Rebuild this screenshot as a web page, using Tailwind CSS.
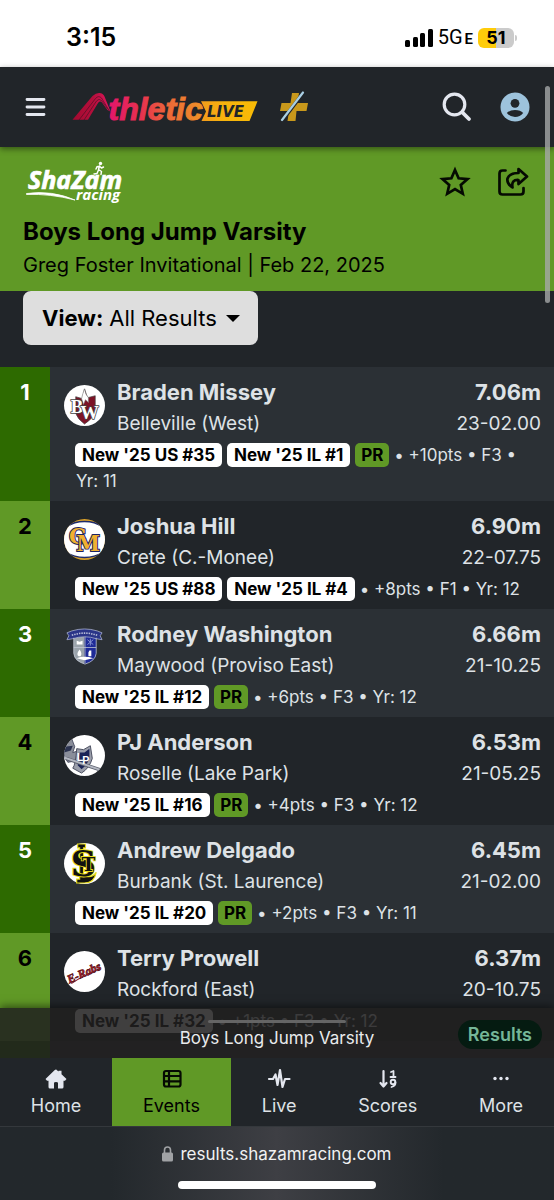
<!DOCTYPE html>
<html lang="en">
<head>
<meta charset="utf-8">
<meta name="viewport" content="width=device-width, initial-scale=1">
<title>Boys Long Jump Varsity</title>
<script src="https://cdn.jsdelivr.net/npm/@tailwindcss/browser@4"></script>
</head>
<body class="relative flex h-screen flex-col overflow-hidden bg-[#212529] font-['Inter','Liberation_Sans',sans-serif] text-[#dee2e6]">

<!-- Phone status bar -->
<div class="flex h-[67px] shrink-0 items-center justify-between bg-white pt-2 pr-10 pl-[66px] text-black">
  <time class="text-[25px] font-semibold">3:15</time>
  <div class="flex items-center gap-[5px]">
    <svg class="h-[18px] w-7" viewBox="0 0 28 18" aria-hidden="true">
      <rect x="0" y="11" width="5" height="7" rx="1.5"/><rect x="8" y="8" width="5" height="10" rx="1.5"/><rect x="15" y="4" width="5" height="14" rx="1.5"/><rect x="23" y="0" width="5" height="18" rx="1.5"/>
    </svg>
    <span class="font-['Roboto','Inter',sans-serif] text-xl leading-6">5G<span class="ml-[2px] text-[15px] font-semibold">E</span></span>
    <span class="relative flex h-5 w-9 items-center justify-center rounded-md bg-linear-to-r from-[#ffcc0a] from-51% to-[#cbcbcb] to-51% text-lg font-bold">51
      <span class="absolute top-[7px] -right-[3px] h-[6px] w-[2px] rounded-r bg-[#cbcbcb]"></span>
    </span>
  </div>
</div>

<!-- Site bar -->
<header class="relative z-10 flex h-20 shrink-0 items-center bg-[#212529] pr-6 pl-6 shadow-[0_2px_6px_rgba(0,0,0,0.45)]">
  <button type="button" aria-label="Menu" class="flex h-8 w-6 items-center">
    <svg class="h-5 w-6" viewBox="0 0 24 20" fill="none" stroke="#e4e7ef" stroke-width="2.8" stroke-linecap="round" aria-hidden="true"><path d="M3 2.5h17M3 10h17M3 17.5h17"/></svg>
  </button>
  <a href="#" aria-label="AthleticLIVE" class="ml-6">
    <svg class="h-10 w-[188px]" viewBox="72 87 188 40" aria-hidden="true">
      <defs>
        <linearGradient id="mark" x1="0" x2="1"><stop offset="0" stop-color="#a30a30"/><stop offset=".55" stop-color="#b50f3c"/><stop offset="1" stop-color="#e3155e"/></linearGradient>
        <linearGradient id="word" x1="0" x2="1"><stop offset="0" stop-color="#e3156b"/><stop offset=".35" stop-color="#e7324f"/><stop offset=".65" stop-color="#ec6a37"/><stop offset="1" stop-color="#ef9327"/></linearGradient>
        <linearGradient id="live" x1="0" x2="1"><stop offset="0" stop-color="#f39a1c"/><stop offset=".4" stop-color="#f6b30d"/><stop offset="1" stop-color="#f8bb05"/></linearGradient>
      </defs>
      <path fill="url(#mark)" d="M72.500 119.800L92.500 96Q96 92.800 99.500 93Q103 93.200 104.500 96.500L110.500 111.500L107.500 110L102 102.500Q100 100.500 98 103L88 119.800Z"/>
      <path fill="none" stroke="#3a1020" stroke-width=".6" d="M79 120L95.500 98.500Q98.500 95 101.500 98L109.500 111M84 120L96.500 101Q99 98 101.500 100.500L108 109.500"/>
      <text x="108.500" y="119.500" font-family="Liberation Sans, sans-serif" font-size="32" font-weight="700" font-style="italic" fill="url(#word)" stroke="url(#word)" stroke-width="1">thletic</text>
      <path fill="url(#live)" d="M201 101.300H257.500L249.500 121H201.500L206 111.500Z"/>
      <text x="207" y="117" font-family="DejaVu Sans, sans-serif" font-size="15" font-weight="700" font-style="oblique" fill="#212529">LIVE</text>
    </svg>
  </a>
  <a href="#" aria-label="AthleticLIVE Plus" class="ml-5">
    <svg class="h-8 w-7" viewBox="0 0 28 32" aria-hidden="true"><path fill="#c8981b" d="M12 2H19L17.500 12H28L26.500 20H16.500L15.500 30H7.500L9 20H0L1.500 12H10.500Z"/><path stroke="#212529" stroke-width="3.500" d="M2 30L24 1"/><path stroke="#a9cfe4" stroke-width="2.200" stroke-linecap="round" d="M2 29L23 1.500"/></svg>
  </a>
  <button type="button" aria-label="Search" class="ml-auto">
    <svg class="size-8" viewBox="0 0 32 32" fill="none" stroke="#e4e7ef" stroke-linecap="round" aria-hidden="true"><circle cx="13.500" cy="13.500" r="10.300" stroke-width="3.200"/><path stroke-width="3.800" d="M21.500 21.500L28 28"/></svg>
  </button>
  <button type="button" aria-label="Account" class="ml-[27px]">
    <svg class="size-[30px]" viewBox="0 0 30 30" aria-hidden="true"><circle cx="15" cy="15" r="14.500" fill="#9dc3dc"/><circle cx="15" cy="11.300" r="4.400" fill="#212529"/><path fill="#212529" d="M6.800 21Q9.500 18 15 18T23.200 21Q20 25 15 25T6.800 21Z"/></svg>
  </button>
</header>

<!-- Event header -->
<section class="h-36 shrink-0 bg-[#609926] px-[23px] pt-3 text-black">
  <div class="flex items-start justify-between">
    <svg class="h-12 w-[104px]" viewBox="23 159 104 48" fill="#fff" role="img" aria-label="ShaZam racing">
      <g font-family="Open Sans, sans-serif" font-weight="700" font-style="italic">
        <text x="28" y="189" font-size="25" stroke="#fff" stroke-width=".7">ShaZam</text>
        <text x="76" y="200" font-size="15">racing</text>
      </g>
      <path d="M26.500 193.500Q52 190 75 200Q50 193.500 26.500 194.500Z" stroke="#fff" stroke-width=".8"/>
      <circle cx="100.500" cy="163.500" r="1.700"/>
      <path fill="none" stroke="#fff" stroke-width="1.500" stroke-linecap="round" stroke-linejoin="round" d="M99.500 166L98.500 169.500L101.500 171.500L101 174.500M98.500 170L97 173.500L94 174M96 169L97 166.800L99.500 166.200L101.500 168L103.500 167"/>
    </svg>
    <div class="flex items-center gap-[26px] pt-[7px] pr-[2px]">
      <button type="button" aria-label="Favorite">
        <svg class="size-8" viewBox="0 0 32 32" fill="none" stroke="#050a02" stroke-width="2.700" aria-hidden="true"><path d="M16 4L19.600 12.300L28.500 13.100L21.800 19L23.800 27.800L16 23.100L8.200 27.800L10.200 19L3.500 13.100L12.400 12.300Z"/></svg>
      </button>
      <button type="button" aria-label="Share">
        <svg class="size-8" viewBox="0 0 32 32" fill="none" stroke="#050a02" stroke-width="2.700" stroke-linejoin="round" stroke-linecap="round" aria-hidden="true"><path d="M8.500 4.500H5.500Q2.500 4.500 2.500 7.500V25.500Q2.500 28.500 5.500 28.500H23.500Q26.500 28.500 26.500 25.500V22"/><path d="M21.500 3L30 10.500L21.500 18V14Q14 13.500 15.500 21.500Q9.500 17.500 10.500 12.500Q12.500 7 21.500 7Z"/></svg>
      </button>
    </div>
  </div>
  <h1 class="mt-3 text-2xl leading-[26px] font-bold">Boys Long Jump Varsity</h1>
  <p class="mt-[7px] text-xl leading-[26px]">Greg Foster Invitational | Feb 22, 2025</p>
</section>

<main class="relative min-h-0 flex-1 overflow-hidden">
  <div class="flex h-[76px] px-[23px]">
    <label class="relative flex h-[54px] items-center gap-[6px] rounded-lg bg-[#dedede] pl-[19px] text-[22px] text-black">
      <span class="font-bold">View:</span>
      <select class="appearance-none bg-transparent pr-[41px] outline-none"><option>All Results</option></select>
      <svg class="pointer-events-none absolute right-[18px] h-[7px] w-[14px]" viewBox="0 0 14 7" aria-hidden="true"><path d="M0 0H14L7 7Z"/></svg>
    </label>
  </div>

  <ol>
    <li class="flex bg-[#2b3035]">
      <div class="w-[50px] shrink-0 bg-[#2d6a00] pt-[10px] text-center text-[22px] leading-[31px] font-bold text-white">1</div>
      <div class="min-w-0 flex-1 pt-[10px] pr-[13px] pb-[7px] pl-[14px]">
        <div class="flex items-start gap-3">
          <svg class="mt-2 size-[41px] shrink-0" viewBox="0 0 42 42" aria-hidden="true"><circle cx="21" cy="21" r="21" fill="#fff"/><path fill="#7c1326" stroke="#444" stroke-width=".7" d="M12 12L19 14L21 4L24 13L32 11V28Q28 36 21 40Q14 35 12 29Z"/><path fill="#fff" stroke="#777" stroke-width=".6" d="M18 14Q19 9 21 4Q22 10 25 13L25 18L22 15L20 20Z"/><text x="7" y="29" font-family="Liberation Serif, serif" font-weight="700" font-size="19" fill="#fff" stroke="#444" stroke-width="1.600" paint-order="stroke">B<tspan dx="-3" dy="6">W</tspan></text></svg>
          <div class="min-w-0 flex-1">
            <div class="flex justify-between text-[22px] leading-[31px] font-bold"><a href="#">Braden Missey</a><span>7.06m</span></div>
            <div class="flex justify-between text-[19px] leading-[31px]"><span>Belleville (West)</span><span>23-02.00</span></div>
          </div>
        </div>
        <p class="mt-[3px] pl-3 text-[17px] leading-[26px]"><span class="-ml-px rounded-[5px] bg-white px-[7px] py-[2px] font-bold text-black">New '25 US #35</span> <span class="rounded-[5px] bg-white px-[7px] py-[2px] font-bold text-black">New '25 IL #1</span> <span class="rounded-[5px] bg-[#609926] px-[6px] py-[2px] font-bold text-black">PR</span> • +10pts • F3 • <span class="whitespace-nowrap">Yr: 11</span></p>
      </div>
    </li>
    <li class="flex bg-[#212529]">
      <div class="w-[50px] shrink-0 bg-[#609926] pt-[10px] text-center text-[22px] leading-[31px] font-bold text-black">2</div>
      <div class="min-w-0 flex-1 pt-[10px] pr-[13px] pb-[7px] pl-[14px]">
        <div class="flex items-start gap-3">
          <svg class="mt-2 size-[41px] shrink-0" viewBox="0 0 42 42" aria-hidden="true"><defs><clipPath id="c2"><circle cx="21" cy="21" r="21"/></clipPath></defs><g clip-path="url(#c2)"><rect width="42" height="42" fill="#d9a02a"/><ellipse cx="21" cy="21" rx="26" ry="18.500" fill="#fff" stroke="#1c2a6b" stroke-width="1.500"/></g><text x="5" y="26" font-family="DejaVu Serif, serif" font-weight="700" font-size="22" fill="#f0b030" stroke="#1c2364" stroke-width="2" paint-order="stroke">C<tspan dx="-10" dy="7">M</tspan></text></svg>
          <div class="min-w-0 flex-1">
            <div class="flex justify-between text-[22px] leading-[31px] font-bold"><a href="#">Joshua Hill</a><span>6.90m</span></div>
            <div class="flex justify-between text-[19px] leading-[31px]"><span>Crete (C.-Monee)</span><span>22-07.75</span></div>
          </div>
        </div>
        <p class="mt-[3px] pl-3 text-[17px] leading-[26px]"><span class="-ml-px rounded-[5px] bg-white px-[7px] py-[2px] font-bold text-black">New '25 US #88</span> <span class="rounded-[5px] bg-white px-[7px] py-[2px] font-bold text-black">New '25 IL #4</span> • +8pts • F1 • Yr: 12</p>
      </div>
    </li>
    <li class="flex bg-[#2b3035]">
      <div class="w-[50px] shrink-0 bg-[#2d6a00] pt-[10px] text-center text-[22px] leading-[31px] font-bold text-white">3</div>
      <div class="min-w-0 flex-1 pt-[10px] pr-[13px] pb-[7px] pl-[14px]">
        <div class="flex items-start gap-3">
          <svg class="mt-2 size-[41px] shrink-0" viewBox="0 0 42 42" aria-hidden="true"><path fill="#9aa3ab" d="M10 10H21V38Q10 35 10 27Z"/><path fill="#1f2b98" d="M21 10H33V27Q33 35 21 38Z"/><path fill="#2a3588" stroke="#aab2d0" stroke-width=".8" d="M3 6L8 4Q21 0 34 4L39 6L37 9L39 13L33 12Q21 8 9 12L3 13L5 9Z"/><path stroke="#c3c8d4" stroke-width=".8" fill="none" d="M10 21H33M21.500 10V37M10 11V27Q11 35 21.500 38Q32 35 33 27V11"/><path stroke="#b7bdd8" stroke-width="1.600" stroke-dasharray="1.500 1" fill="none" d="M8 8.500Q21 4 34 8.500"/><path fill="#fff" d="M13 14L16 15L19 14V18H13ZM16 23Q19 27 17 30H15Q12 28 16 23ZM26 24H28V30H25V26ZM13 32Q21 29 30 32L21 34Z"/><path stroke="#8a94d4" stroke-width="1" d="M24 13L30 18M30 13L24 18M27 12V19"/></svg>
          <div class="min-w-0 flex-1">
            <div class="flex justify-between text-[22px] leading-[31px] font-bold"><a href="#">Rodney Washington</a><span>6.66m</span></div>
            <div class="flex justify-between text-[19px] leading-[31px]"><span>Maywood (Proviso East)</span><span>21-10.25</span></div>
          </div>
        </div>
        <p class="mt-[3px] pl-3 text-[17px] leading-[26px]"><span class="-ml-px rounded-[5px] bg-white px-[7px] py-[2px] font-bold text-black">New '25 IL #12</span> <span class="rounded-[5px] bg-[#609926] px-[6px] py-[2px] font-bold text-black">PR</span> • +6pts • F3 • Yr: 12</p>
      </div>
    </li>
    <li class="flex bg-[#212529]">
      <div class="w-[50px] shrink-0 bg-[#609926] pt-[10px] text-center text-[22px] leading-[31px] font-bold text-black">4</div>
      <div class="min-w-0 flex-1 pt-[10px] pr-[13px] pb-[7px] pl-[14px]">
        <div class="flex items-start gap-3">
          <svg class="mt-2 size-[41px] shrink-0" viewBox="0 0 42 42" aria-hidden="true"><defs><clipPath id="c4"><circle cx="21" cy="21" r="21"/></clipPath></defs><g clip-path="url(#c4)"><rect width="42" height="42" fill="#fff"/><path fill="#8a8e9a" stroke="#33384f" stroke-width=".8" d="M0 6L8 4L11 12L9 18L15 16L14 26L4 28L0 22Z"/><path fill="#2b3350" d="M0 12L9 11L7 16L0 18Z"/><path fill="#9a9eaa" stroke="#4a4e60" stroke-width="1" d="M13 14L20 15L27 11L29 24Q26 34 18 39L9 34Q12 30 13 14Z"/><path fill="#1b2456" d="M16 18L21 18L26 14V24Q23 32 18 35L14 31Z"/><path stroke="#5a5e6c" stroke-width="3.500" d="M2 24L38 36"/><path stroke="#b4b8c2" stroke-width="2" d="M0 23L38 36"/><text x="13" y="27" font-family="Liberation Sans, sans-serif" font-size="11" font-weight="700" fill="#fff">L<tspan dx="-1" dy="3">P</tspan></text></g></svg>
          <div class="min-w-0 flex-1">
            <div class="flex justify-between text-[22px] leading-[31px] font-bold"><a href="#">PJ Anderson</a><span>6.53m</span></div>
            <div class="flex justify-between text-[19px] leading-[31px]"><span>Roselle (Lake Park)</span><span>21-05.25</span></div>
          </div>
        </div>
        <p class="mt-[3px] pl-3 text-[17px] leading-[26px]"><span class="-ml-px rounded-[5px] bg-white px-[7px] py-[2px] font-bold text-black">New '25 IL #16</span> <span class="rounded-[5px] bg-[#609926] px-[6px] py-[2px] font-bold text-black">PR</span> • +4pts • F3 • Yr: 12</p>
      </div>
    </li>
    <li class="flex bg-[#2b3035]">
      <div class="w-[50px] shrink-0 bg-[#2d6a00] pt-[10px] text-center text-[22px] leading-[31px] font-bold text-white">5</div>
      <div class="min-w-0 flex-1 pt-[10px] pr-[13px] pb-[7px] pl-[14px]">
        <div class="flex items-start gap-3">
          <svg class="mt-2 size-[41px] shrink-0" viewBox="0 0 42 42" aria-hidden="true"><circle cx="21" cy="21" r="21" fill="#fff"/><path fill="#111" stroke="#e8dc1c" stroke-width="1.200" d="M14 1H22V5H20V33Q28 37 33 30Q31 41 21 41H13V37H16V5H14Z"/><text x="7" y="34" font-family="DejaVu Serif, serif" font-size="36" font-weight="700" fill="#111" stroke="#e8dc1c" stroke-width="1.800" paint-order="stroke">S<tspan dx="-15" dy="-5" font-size="19">T</tspan></text></svg>
          <div class="min-w-0 flex-1">
            <div class="flex justify-between text-[22px] leading-[31px] font-bold"><a href="#">Andrew Delgado</a><span>6.45m</span></div>
            <div class="flex justify-between text-[19px] leading-[31px]"><span>Burbank (St. Laurence)</span><span>21-02.00</span></div>
          </div>
        </div>
        <p class="mt-[3px] pl-3 text-[17px] leading-[26px]"><span class="-ml-px rounded-[5px] bg-white px-[7px] py-[2px] font-bold text-black">New '25 IL #20</span> <span class="rounded-[5px] bg-[#609926] px-[6px] py-[2px] font-bold text-black">PR</span> • +2pts • F3 • Yr: 11</p>
      </div>
    </li>
    <li class="flex bg-[#212529]">
      <div class="w-[50px] shrink-0 bg-[#609926] pt-[10px] text-center text-[22px] leading-[31px] font-bold text-black">6</div>
      <div class="min-w-0 flex-1 pt-[10px] pr-[13px] pb-[7px] pl-[14px]">
        <div class="flex items-start gap-3">
          <svg class="mt-2 size-[41px] shrink-0" viewBox="0 0 42 42" aria-hidden="true"><circle cx="21" cy="21" r="21" fill="#fff"/><g transform="rotate(-24 21 22)"><path d="M4 27Q20 24 37 25" fill="none" stroke="#8c1a26"/><text x="2" y="26" font-family="Liberation Serif, serif" font-size="12" font-weight="700" font-style="italic" fill="#b81c2a" stroke="#5c1620" stroke-width=".7">E-Rabs</text></g></svg>
          <div class="min-w-0 flex-1">
            <div class="flex justify-between text-[22px] leading-[31px] font-bold"><a href="#">Terry Prowell</a><span>6.37m</span></div>
            <div class="flex justify-between text-[19px] leading-[31px]"><span>Rockford (East)</span><span>20-10.75</span></div>
          </div>
        </div>
        <p class="mt-[3px] pl-3 text-[17px] leading-[26px]"><span class="-ml-px rounded-[5px] bg-white px-[7px] py-[2px] font-bold text-black">New '25 IL #32</span> • +1pts • F3 • Yr: 12</p>
      </div>
    </li>
    <li class="flex h-[108px] bg-[#2b3035]" aria-hidden="true"><div class="w-[50px] bg-[#2d6a00]"></div></li>
  </ol>

  <!-- Event sheet handle over the list -->
  <div class="absolute inset-x-0 bottom-0 flex h-[50px] items-center justify-center bg-[#211f20]/86 shadow-[0_-2px_8px_rgba(0,0,0,0.5)]">
    <span class="absolute top-3 left-3/8 h-[3px] w-1/4 rounded-full bg-[#656565]"></span>
    <span class="pt-[10px] text-[17px] leading-6 text-[#e8eaec]">Boys Long Jump Varsity</span>
    <a href="#" class="absolute top-3 right-3 flex h-[29px] items-center rounded-full bg-[#051b11] px-[10px] text-lg font-semibold text-[#75b798]">Results</a>
  </div>
</main>

<nav class="flex h-[68px] shrink-0 text-lg leading-6">
  <a href="#" class="flex flex-auto flex-col items-center gap-1 pt-[10px]">
    <svg class="size-[22px]" viewBox="0 0 22 22" fill="#e4e7ef" aria-hidden="true"><path d="M11 1.500L13.500 3.500V2.800H16.500V6.200L21.500 11L20 12.800H18.500V19Q18.500 20.500 17 20.500H13V15Q13 14 11 14T9 15V20.500H5Q3.500 20.500 3.500 19V12.800H2L.5 11L9.500 2.200Q11 1 12.500 2.200Z"/></svg>
    Home</a>
  <a href="#" aria-current="page" class="flex flex-auto flex-col items-center gap-1 bg-[#609926] pt-[10px] text-black">
    <svg class="size-[22px]" viewBox="0 0 22 22" fill="none" stroke="#050a02" stroke-width="2.200" aria-hidden="true"><rect x="3" y="3" width="16.500" height="15.500" rx="2"/><path d="M3 8H19M3 13.300H19M8 3V18.500"/></svg>
    Events</a>
  <a href="#" class="flex flex-auto flex-col items-center gap-1 pt-[10px]">
    <svg class="h-[22px] w-6" viewBox="0 0 24 22" fill="none" stroke="#e4e7ef" stroke-width="2.200" stroke-linejoin="round" stroke-linecap="round" aria-hidden="true"><path d="M2 11H6L8.500 6.500L10.500 17L13 2L15.500 19L18 11H22.500"/></svg>
    Live</a>
  <a href="#" class="flex flex-auto flex-col items-center gap-1 pt-[10px]">
    <svg class="size-[22px]" viewBox="0 0 22 22" fill="none" stroke="#e4e7ef" stroke-width="2.200" stroke-linejoin="round" stroke-linecap="round" aria-hidden="true"><path d="M6.500 3V18M3.500 15L6.500 18.500L9.500 15"/><path stroke-width="1.800" d="M14 4L16.500 3V9M13.500 9H18.500M18.500 14.500Q18.500 18 14.500 19"/><circle cx="16" cy="14" r="2.300" stroke-width="1.900"/></svg>
    Scores</a>
  <a href="#" class="flex flex-auto flex-col items-center gap-1 pt-[10px]">
    <svg class="size-[22px]" viewBox="0 0 22 22" fill="#e4e7ef" aria-hidden="true"><circle cx="5" cy="10.500" r="1.700"/><circle cx="11" cy="10.500" r="1.700"/><circle cx="17" cy="10.500" r="1.700"/></svg>
    More</a>
</nav>

<!-- Browser address bar -->
<footer class="flex h-[74px] shrink-0 flex-col items-center justify-between border-t border-[#34383c] bg-linear-to-r from-[#23282c] from-20% via-[#3e3f44] to-[#23282c] to-80% pt-[15px] pb-[11px]">
  <div class="flex items-center gap-[7px] text-[17px] leading-6 text-[#f0f1f2]">
    <svg class="h-4 w-[11px]" viewBox="0 0 11 16" aria-hidden="true"><rect y="6.500" width="11" height="9" rx="1.500" fill="#a0a2a5"/><path d="M2.500 7V4Q2.500 1 5.500 1T8.500 4V7" fill="none" stroke="#a0a2a5" stroke-width="1.600"/></svg>
    results.shazamracing.com
  </div>
  <div class="h-2 w-[198px] rounded-full bg-white"></div>
</footer>

<!-- Scroll indicator -->
<div class="absolute top-[86px] right-1 z-20 h-[217px] w-[5px] rounded-full bg-[#a5a7a8]/80"></div>
</body>
</html>
